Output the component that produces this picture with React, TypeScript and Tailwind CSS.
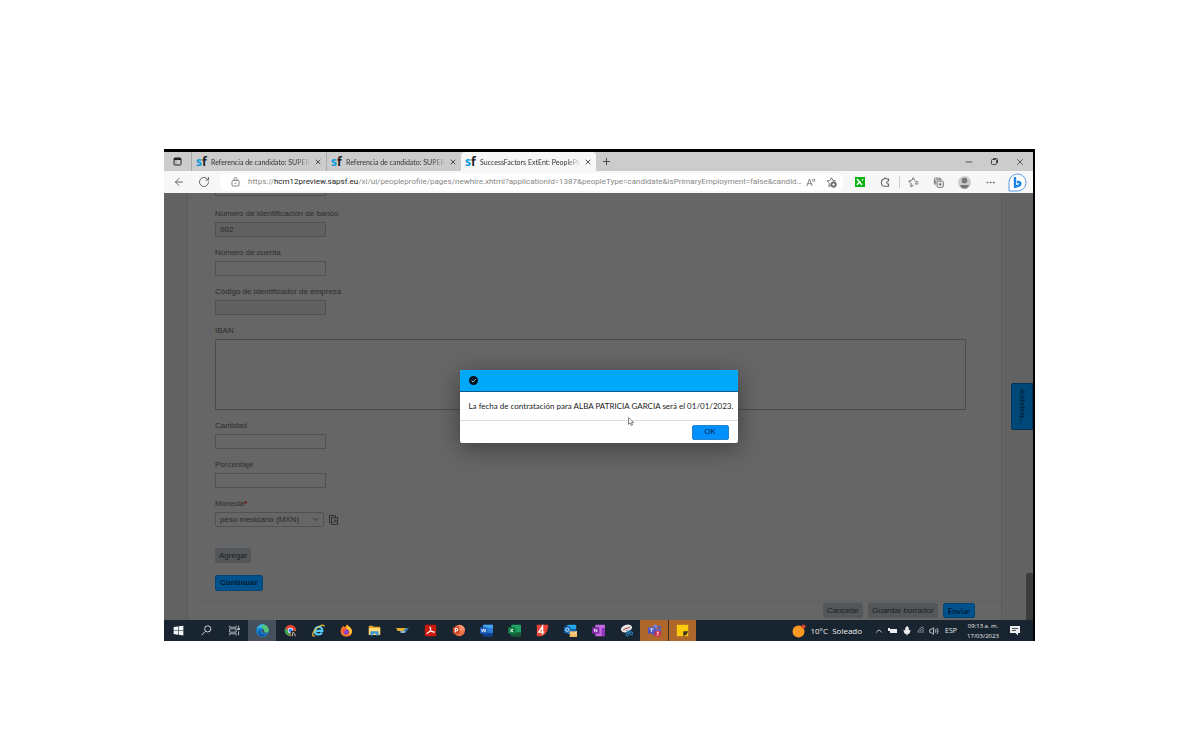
import React from "react";
import { ArrowLeft, RotateCw, X, Minus, Plus, ChevronDown, ChevronUp, Ellipsis, Mic, Volume2, Wifi } from "lucide-react";

function SfLogo() {
  return (
    <span aria-hidden="true" className="flex w-3 shrink-0 text-[12px] leading-3 font-bold">
      <span className="text-[#0a97dd]">s</span>
      <span className="text-[#222]">f</span>
    </span>
  );
}

function Tab({ title, active = false }: { title: string; active?: boolean }) {
  return (
    <div className={`flex h-full w-[135px] items-center gap-[3px] pr-1 pl-1 ${active ? "rounded-t-sm bg-[#f7f7f7]" : "border-l border-[#aaa]"}`}>
      <SfLogo />
      <button className="w-[101px] overflow-hidden mask-r-from-85% text-left font-['Lato',sans-serif] text-[7px] leading-3 whitespace-nowrap text-[#333]">{title}</button>
      <button aria-label="Cerrar pestaña" className="ml-auto shrink-0"><X size={8} strokeWidth={2.5} color="#333" /></button>
    </div>
  );
}

function Field({ id, label, value = "", readOnly = false, multiline = false }: { id: string; label: string; value?: string; readOnly?: boolean; multiline?: boolean }) {
  return (
    <div className="flex flex-col gap-[2px]">
      <label htmlFor={id} className="h-3 text-[8px] leading-3 text-[#2d2d2d]">{label}</label>
      {multiline ? (
        <textarea id={id} className="block h-[71px] w-full resize-none border border-[#4c4c4c] bg-[#666] px-1 text-[8px]" />
      ) : (
        <input id={id} defaultValue={value} readOnly={readOnly} className={`h-[15px] w-[111px] border border-[#515151] px-1 text-[8px] leading-3 text-[#262626] ${readOnly ? "bg-[#616161]" : "bg-[#666]"}`} />
      )}
    </div>
  );
}

const apps: { name: string; bg?: string; icon: React.ReactNode }[] = [
  { name: "Inicio", icon: <path fill="#f2f5f7" d="M2 3.6 7.4 3v4.6H2zM8.1 2.900 14 2v5.600H8.100zM2 8.300h5.400v4.900L2 12.400zM8.100 8.300H14V14l-5.900-.8z" /> },
  { name: "Buscar", icon: <g fill="none" stroke="#d0d6db" strokeWidth="1.2"><circle cx="9.5" cy="6" r="3.800" /><path d="m6.700 9-4.700 4.700" /></g> },
  { name: "Vista de tareas", icon: <g fill="none" stroke="#c0c6cb" strokeWidth="1.100"><path d="M2 2v2h8V2M2 14v-2h8v2M2 6h8v4H2zM13 2v2m0 5v5" /><path fill="#c9ced3" d="M12 5h2v2h-2z" /></g> },
  { name: "Edge", bg: "bg-[#45505c]", icon: <><circle cx="8" cy="8" r="7.800" fill="#1683d4" /><path fill="#52c878" d="M.8 6C3 .5 9-.8 12.600 1.900 15.600 4.200 16.200 7.600 15.100 9.400c-1.300 2-4.600 1.600-5.300.6.7-.9 1-2.800-.7-4C6.500 4.200 2.800 4.300.8 6Z" /><path fill="#35b6dd" d="M.8 6C3 .5 8-.6 10.500 1 7 1 6 4 9.100 6 6.500 4.200 2.800 4.300.8 6Z" /><path fill="#0d57a8" d="M5.800 6.800c-2 3.900 1.700 7 6.800 5.600C10 16.500 4.500 15.800 3.200 12 2.500 9.600 3.700 7.400 5.800 6.800Z" /><path fill="#45505c" d="M7 7.500c1-1.800 3.500-.8 2.800 1.500-.4 1 1 2.500 5 1.500-1 2-7.800 2-7.800-3Z" /></> },
  { name: "Chrome", icon: <><circle cx="8" cy="8" r="7" fill="#e94235" /><path fill="#fbbc05" d="M8 8h7a7 7 0 0 1-7 7Z" /><path fill="#34a853" d="M8 15A7 7 0 0 1 1.900 4.500L6 9.500Z" /><circle cx="8" cy="8" r="3.400" fill="#fff" /><circle cx="8" cy="8" r="2.500" fill="#4285f4" /><circle cx="12" cy="12" r="4" fill="#272727" /><path stroke="#ddd" fill="none" d="m10 15 1-5 2 2 1 3" /></> },
  { name: "Internet Explorer", icon: <><path fill="none" stroke="#55c8f5" strokeWidth="2.700" d="M3.500 8.500h9.200c.2-7.200-9.200-6.200-9.200 0 0 5.300 6.700 5.600 8.800 2" /><path fill="none" stroke="#f5c542" strokeWidth="1.300" d="M4 14.500C-2 16.500 1 8 8 3.500c4-2.600 7-3 7-.2" /></> },
  { name: "Firefox", icon: <><path fill="#ff7921" d="M2.700 4 4 2l1.300 2L9 .5c.2 2 4.400 2.800 5.500 6.500C16 12 12.400 15.500 8 15.500S.7 12.300.8 8.500c0-1.800.7-3.400 1.900-4.500Z" /><path fill="#ffca36" d="M9 .5c.2 2 5 3.500 5.500 7.500.4 3-1.700 5-3 5.500 2-4-1-6.500-3.500-7.500Z" /><circle cx="7.500" cy="9.500" r="3.500" fill="#8744c5" /><path fill="#ff543f" d="M2 6c3-1 4 1 6 1-1 1.500-3 1-3 3-2 0-3-2-3-4Z" /></> },
  { name: "Explorador de archivos", icon: <><path fill="#e9aa27" d="M1 2h5l1 1.500h8V13H1z" /><path fill="#ffdc78" d="M1 5h14v8.500H1z" /><path fill="#3d97d8" d="M3 9h10v5h-3v-2H6v2H3z" /></> },
  { name: "SAP Logon", icon: <><path fill="#3b7fae" d="M5 5h11l-5 6H5l3-3z" /><path fill="#e7ae34" d="M0 5h12L9 8.500H2z" /><path fill="#7cb5d8" d="M5 8.500h7L10.500 11H6z" /></> },
  { name: "Acrobat", icon: <><rect x="1" y="1" width="14" height="14" rx="1.500" fill="#c91b0d" /><path fill="none" stroke="#fff" strokeWidth="1.200" d="M7.500 3.500c2 2 0 6-4 8.500 0-2 7-4 9.500-2-2 1-6-2-5.500-6.500Z" /></> },
  { name: "PowerPoint", icon: <><circle cx="9" cy="8" r="7" fill="#ed7049" /><path fill="#ff9270" d="M9 1a7 7 0 0 1 7 7H9z" /><rect x="1" y="4" width="8" height="8" rx="1" fill="#c4401f" /><path fill="none" stroke="#fff" strokeWidth="1.300" d="M4 10.500v-5h1.500c2 0 2 3 0 3H4" /></> },
  { name: "Word", icon: <><rect x="4" y="1" width="12" height="14" rx="1" fill="#2b7cd3" /><path fill="#44a5ee" d="M4 1h12v4H4z" /><path fill="#103f91" d="M4 11h12v4H4z" /><rect y="4" width="9" height="8" rx="1" fill="#185abd" /><path fill="none" stroke="#fff" d="m2 6 1 4 1.500-4L6 10l1-4" /></> },
  { name: "Excel", icon: <><rect x="4" y="1" width="12" height="14" rx="1" fill="#21a366" /><path fill="#107c41" d="M4 5h6v10H4z" /><path fill="#185c37" d="M10 10h6v5H4v-3h6z" /><rect y="4" width="9" height="8" rx="1" fill="#107c41" /><path stroke="#fff" strokeWidth="1.200" d="m3 6 3 4m0-4-3 4" /></> },
  { name: "Foxit 4", icon: <><path fill="#ea4335" d="M1 1h14c0 7-3 13-9 14H1z" /><path fill="none" stroke="#fff" strokeWidth="1.800" d="M8 13V3L3.500 10H10" /></> },
  { name: "Outlook", icon: <><rect x="4" y="1" width="11" height="11" rx="1" fill="#28a8e8" /><path fill="#1565ad" d="M4 6h11v5H4z" /><rect y="3" width="8" height="8" rx="1" fill="#0f6cbd" /><circle cx="4" cy="7" r="2" fill="none" stroke="#fff" /><path fill="#f3b861" d="M7 9h9v7H7z" /><path fill="none" stroke="#fff0ca" d="m7 9 4.500 4L16 9" /></> },
  { name: "OneNote", icon: <><rect x="4" y="1" width="12" height="14" rx="1" fill="#c267dc" /><path fill="#8e34b8" d="M12 5h4v10h-4z" /><rect y="4" width="9" height="8" rx="1" fill="#7a26a3" /><path fill="none" stroke="#fff" d="M3 10V6l3 4V6" /></> },
  { name: "Recortes", icon: <><ellipse cx="8" cy="5.500" rx="7" ry="4.500" fill="#e6e6e6" transform="rotate(-18 8 5.500)" /><path stroke="#b32e2e" strokeWidth="1.200" d="m4 7 8-3" /><g fill="none" stroke="#287bb0" strokeWidth="1.400"><circle cx="9" cy="13" r="1.800" /><circle cx="14" cy="11.500" r="1.800" /><path d="m8 8 5 3m0-4-4 4" /></g></> },
  { name: "Teams", bg: "bg-[#ad672b]", icon: <><circle cx="9" cy="3" r="2.500" fill="#7b83eb" /><circle cx="14" cy="4" r="1.700" fill="#5059c9" /><path fill="#5b63cc" d="M5 6h11v5c-2 4-8 5-11 1z" /><rect y="4" width="9" height="8" rx="1" fill="#4b53bc" /><path stroke="#fff" d="M2 6h5M4.500 6v4" /><circle cx="12" cy="12" r="4" fill="#cf2748" /><path fill="none" stroke="#fff" d="M10.500 10h2.500l-1.500 1.800c3 0 1.500 3.200-1 2" /></> },
  { name: "Notas rápidas", bg: "bg-[#ad672b] border-l border-[#3c3027]", icon: <><path fill="#fccb0d" d="M1 1h14v14H1z" /><path fill="#3b3325" d="M9 15V9h6l-2 4z" /></> },
];

export default function App() {
  return (
    <main className="min-h-screen bg-white px-[164px] pt-[149px] font-['Liberation_Sans',sans-serif]">
      <div className="mr-px border-t-[3px] border-r-2 border-black">
        <header className="font-['Open_Sans',sans-serif]">
          <div className="flex h-[19px] items-center bg-[#ccc]">
            <button aria-label="Menú de pestañas" className="flex w-[27px] justify-center">
              <svg width="9" height="9" viewBox="0 0 9 9"><rect x="1" y="1" width="7" height="7" rx="1" fill="none" stroke="#222" /><path d="M1 1h7v2H1z" fill="#222" /><path d="M3 3v5" stroke="#777" strokeWidth=".6" /></svg>
            </button>
            <Tab title="Referencia de candidato: SUPER" />
            <Tab title="Referencia de candidato: SUPER" />
            <Tab title="SuccessFactors ExtEnt: PeoplePro" active />
            <button aria-label="Nueva pestaña" className="flex w-5 justify-center"><Plus size={11} color="#444" /></button>
            <div className="ml-auto flex items-center gap-4 pr-2 text-[#444]">
              <button aria-label="Minimizar"><Minus size={10} /></button>
              <button aria-label="Restaurar"><svg width="9" height="9" viewBox="0 0 9 9" fill="none" stroke="currentColor"><rect x="1.500" y="2.500" width="5" height="5" rx="1" /><path d="M3 1.500h3.500q1 0 1 1V6" /></svg></button>
              <button aria-label="Cerrar"><X size={10} /></button>
            </div>
          </div>
          <div className="flex h-[22px] items-center bg-[#f7f7f7] text-[#666]">
            <button aria-label="Atrás" className="ml-[9px]"><ArrowLeft size={12} /></button>
            <button aria-label="Actualizar" className="ml-[13px]"><RotateCw size={12} /></button>
            <div className="ml-[10px] flex h-[18px] min-w-0 flex-1 items-center rounded-md bg-white pl-[11px]">
              <svg width="9" height="10" viewBox="0 0 9 10" fill="none" stroke="#777" strokeWidth=".9" className="mr-2 shrink-0"><rect x="1" y="3.500" width="7" height="5.500" rx="1" /><path d="M3 3.500V2a1.500 1.500 0 0 1 3 0v1.500" /><circle cx="4.500" cy="6.300" r=".4" /></svg>
              <div className="min-w-0 flex-1 overflow-hidden font-['Roboto',sans-serif] text-[8px] leading-4 text-ellipsis whitespace-nowrap text-[#888]">
                https://<span className="text-[#222]">hcm12preview.sapsf.eu</span>/xi/ui/peopleprofile/pages/newhire.xhtml?applicationId=1387&amp;peopleType=candidate&amp;isPrimaryEmployment=false&amp;candidateId=1
              </div>
              <button aria-label="Lectura en voz alta" className="ml-1">
                <svg width="10" height="9" viewBox="0 0 10 9" fill="none" stroke="currentColor" strokeWidth=".8"><path d="m.8 8 2.700-7 2.700 7M1.700 5.700h3.600M6.500 1q1 1 0 2.500M8 .5q1.500 1.500 0 3.500" /></svg>
              </button>
              <button aria-label="Agregar a favoritos" className="mr-[6px] ml-[10px]">
                <svg width="11" height="11" viewBox="0 0 16 16" fill="none" stroke="currentColor" strokeWidth="1.300"><path d="m8 1 2 4 4.500.7M8 1 6 5l-4.500.7L5 9l-1 5 3-1.500" /><circle cx="11" cy="11" r="4" fill="#777" /><path stroke="#fff" d="M11 9v4M9 11h4" /></svg>
              </button>
            </div>
            <div className="ml-3 flex items-center">
              <button aria-label="Extensión" className="flex size-[10px] items-center justify-center bg-[#0cb212]"><svg width="8" height="8" viewBox="0 0 8 8" stroke="#fff" strokeWidth="1.500"><path d="m1 1 5 6M1 7l3-4" /><path d="m6 3 1-2" strokeWidth="1" /></svg></button>
              <button aria-label="Extensiones" className="ml-[15px]"><svg width="11" height="11" viewBox="0 0 16 16" fill="none" stroke="currentColor" strokeWidth="1.500"><path d="M12.500 6V3H9.500a2 2 0 0 0-3.800 0C3 3.500 2 5.500 2 8s1.500 5.500 5 5.500h5.500v-3.200a2 2 0 0 1-2.500-2A2 2 0 0 1 12.500 6Z" /></svg></button>
              <span className="ml-2 h-3 w-px bg-[#ccc]" />
              <button aria-label="Favoritos" className="ml-2"><svg width="11" height="11" viewBox="0 0 16 16" fill="none" stroke="currentColor" strokeWidth="1.400"><path d="M10 5 7.500 1 5.500 5 1 6l3.500 3.500L4 14l4-2M10 7h5M10 10h5" /></svg></button>
              <button aria-label="Colecciones" className="ml-[14px]"><svg width="11" height="11" viewBox="0 0 16 16" fill="none" stroke="currentColor" strokeWidth="1.300"><path d="M4 12 2 10V3q0-1.500 1.500-1.500H10L12 4M4 10V5q0-1 1-1h7" /><rect x="6" y="6" width="9" height="9" rx="1.500" /><path d="M10.500 8v5M8 10.500h5" /></svg></button>
              <button aria-label="Perfil" className="ml-[14px]"><svg width="13" height="13" viewBox="0 0 16 16"><circle cx="8" cy="8" r="8" fill="#ccc" /><circle cx="8" cy="5.500" r="3.500" fill="#777" /><path fill="#777" d="M2.500 11h11c-1 6-10 6-11 0" /></svg></button>
              <button aria-label="Más opciones" className="ml-[14px]"><Ellipsis size={11} /></button>
              <button aria-label="Bing" className="mr-[6px] ml-3"><svg width="19" height="19" viewBox="0 0 19 19"><path d="M1 18V9.500A8.500 8.500 0 1 1 9.500 18z" fill="#fff" stroke="#5797e8" strokeWidth="1" /><path d="M7 4v10l4.500-1.700c2-2 0-4-2.500-3" fill="none" stroke="#1b86e8" strokeWidth="2.400" strokeLinejoin="round" /></svg></button>
            </div>
          </div>
        </header>

        <section className="relative flex bg-[#626262]">
          <form className="mr-[31px] ml-[23px] min-w-0 flex-1 border-x border-[#5a5a5a] bg-[#666]">
            <div className="flex flex-col pr-[35px] pl-[27px]">
              <div className="mb-3 h-[3px] w-[111px] border-x border-b border-[#515151]" />
              <div className="flex flex-col gap-[10px]">
                <Field id="banco" label="Número de identificación de banco" value="002" readOnly />
                <Field id="cuenta" label="Número de cuenta" />
                <Field id="empresa" label="Código de identificador de empresa" readOnly />
                <Field id="iban" label="IBAN" multiline />
                <Field id="cantidad" label="Cantidad" />
                <Field id="porcentaje" label="Porcentaje" />
                <div className="flex flex-col gap-[2px]">
                  <label htmlFor="moneda" className="h-3 text-[8px] leading-3 text-[#2d2d2d]">Moneda<span className="font-bold text-[#600]">*</span></label>
                  <div className="flex items-center gap-[5px]">
                    <div className="relative">
                      <select id="moneda" className="block h-[15px] w-[109px] appearance-none rounded-xs border border-[#515151] bg-[#666] pl-1 text-[8px] leading-3 text-[#262626]"><option>peso mexicano (MXN)</option></select>
                      <ChevronDown size={9} color="#2d2d2d" className="pointer-events-none absolute top-[3px] right-1" />
                    </div>
                    <button type="button" aria-label="Abrir lista"><svg width="9" height="10" viewBox="0 0 9 10" fill="none" stroke="#303030"><path d="M2.500 7.500h-2v-7h6v2M2.500 2.500h6v7h-6zM4 8l3-3M5 5h2v2" /></svg></button>
                  </div>
                </div>
              </div>
              <button type="button" className="mt-[21px] h-[15px] self-start rounded-xs bg-[#54575a] px-1 text-[8px] leading-3 text-[#1c1c1c]">Agregar</button>
              <button type="button" className="mt-3 h-4 self-start rounded-xs border border-[#004576] bg-[#00528c] px-1 text-[8px] leading-3 font-bold text-[#001c36]">Continuar</button>
            </div>
            <div className="mt-[10px] ml-3 flex justify-end gap-[5px] border-t border-[#5f5f5f] pt-px pr-[26px] pb-0.5 text-[8px] leading-3">
              <button type="button" className="h-[15px] rounded-xs bg-[#54575a] px-1 text-[#1c1c1c]">Cancelar</button>
              <button type="button" className="h-[15px] rounded-xs bg-[#54575a] px-1 text-[#1c1c1c]">Guardar borrador</button>
              <button type="button" className="h-[15px] rounded-xs border border-[#004576] bg-[#00528c] px-1 font-['Lato',sans-serif] font-bold text-[#001c36]">Enviar</button>
            </div>
          </form>
          <div className="absolute right-0 bottom-0 h-[47px] w-[7px] rounded-t-xs bg-[#3c3c3c]" />
          <button className="absolute top-[190px] right-0 flex h-[47px] w-[22px] items-center justify-center rounded-l-xs border border-[#003457] bg-[#004877] text-[8px] font-bold text-[#00223c] [writing-mode:vertical-rl]">Asisten...</button>

          <div className="absolute inset-0 flex items-center justify-center">
            <div role="dialog" aria-label="Confirmación de contratación" className="relative w-[278px] rounded-xs bg-white text-[8px] leading-3 text-[#222] shadow-[0_5px_24px_rgba(0,0,0,0.4)]">
              <div className="flex h-[22px] items-center rounded-t-xs border-b border-[#075b8d] bg-[#00a8fa] px-[9px]">
                <svg width="9" height="9" viewBox="0 0 9 9"><circle cx="4.500" cy="4.500" r="4.500" fill="#05121c" /><path d="m2.500 4.600 1.500 1.500 2.700-3" fill="none" stroke="#80c8ee" /></svg>
              </div>
              <p className="flex h-[28px] items-center px-[9px] font-['Lato',sans-serif] whitespace-nowrap">La fecha de contratación para ALBA PATRICIA GARCIA será el 01/01/2023.</p>
              <div className="flex h-[23px] items-center justify-end border-t border-[#ddd] pr-[9px]">
                <button className="h-[15px] w-[37px] rounded-xs border border-[#2384cd] bg-[#0090ff] text-[8px] leading-3 text-[#06213b]">OK</button>
              </div>
              <svg className="absolute top-[47px] left-[168px]" width="6" height="9" viewBox="0 0 6 9"><path d="M.5.500v7l1.700-1.600L3.300 8.500l1.200-.5-1-2.500h2.200z" fill="#fff" stroke="#666" strokeWidth=".8" /></svg>
            </div>
          </div>
        </section>

        <footer className="flex h-[21px] items-center bg-[#182430] font-['Open_Sans',sans-serif] text-[#eee]">
          {apps.map((a) => (
            <button key={a.name} aria-label={a.name} className={`flex h-full w-7 shrink-0 items-center justify-center ${a.bg ?? ""}`}>
              <svg width="13" height="13" viewBox="0 0 16 16">{a.icon}</svg>
            </button>
          ))}
          <div className="ml-auto flex items-center pr-3">
            <svg width="14" height="14" viewBox="0 0 14 14"><circle cx="6.500" cy="7.500" r="6" fill="#f99822" /><circle cx="11.500" cy="2.500" r="2" fill="#dc4932" /></svg>
            <span className="ml-1 text-[8px] leading-3 whitespace-nowrap">10°C&nbsp; Soleado</span>
            <ChevronUp size={10} className="ml-3" />
            <svg width="10" height="8" viewBox="0 0 10 8" className="ml-1"><path fill="#eee" d="M0 1h2v1h7v4H2V4H0z" /></svg>
            <Mic size={10} fill="#eee" className="ml-1" />
            <Wifi size={9} className="ml-[5px] -rotate-45 text-[#aaa]" />
            <Volume2 size={10} className="ml-[3px]" />
            <span className="ml-[6px] text-[7px] leading-3">ESP</span>
            <time className="ml-2 w-9 text-center text-[6px] leading-[10px] whitespace-nowrap">09:13 a. m.<br />17/03/2023</time>
            <svg width="11" height="11" viewBox="0 0 11 11" className="ml-[9px]"><path fill="#eee" d="M0 1h10v7H8v2.500L5.500 8H0z" /><path stroke="#182430" strokeWidth=".8" d="M2 3.500h6M2 5.500h4" /></svg>
          </div>
        </footer>
      </div>
    </main>
  );
}
